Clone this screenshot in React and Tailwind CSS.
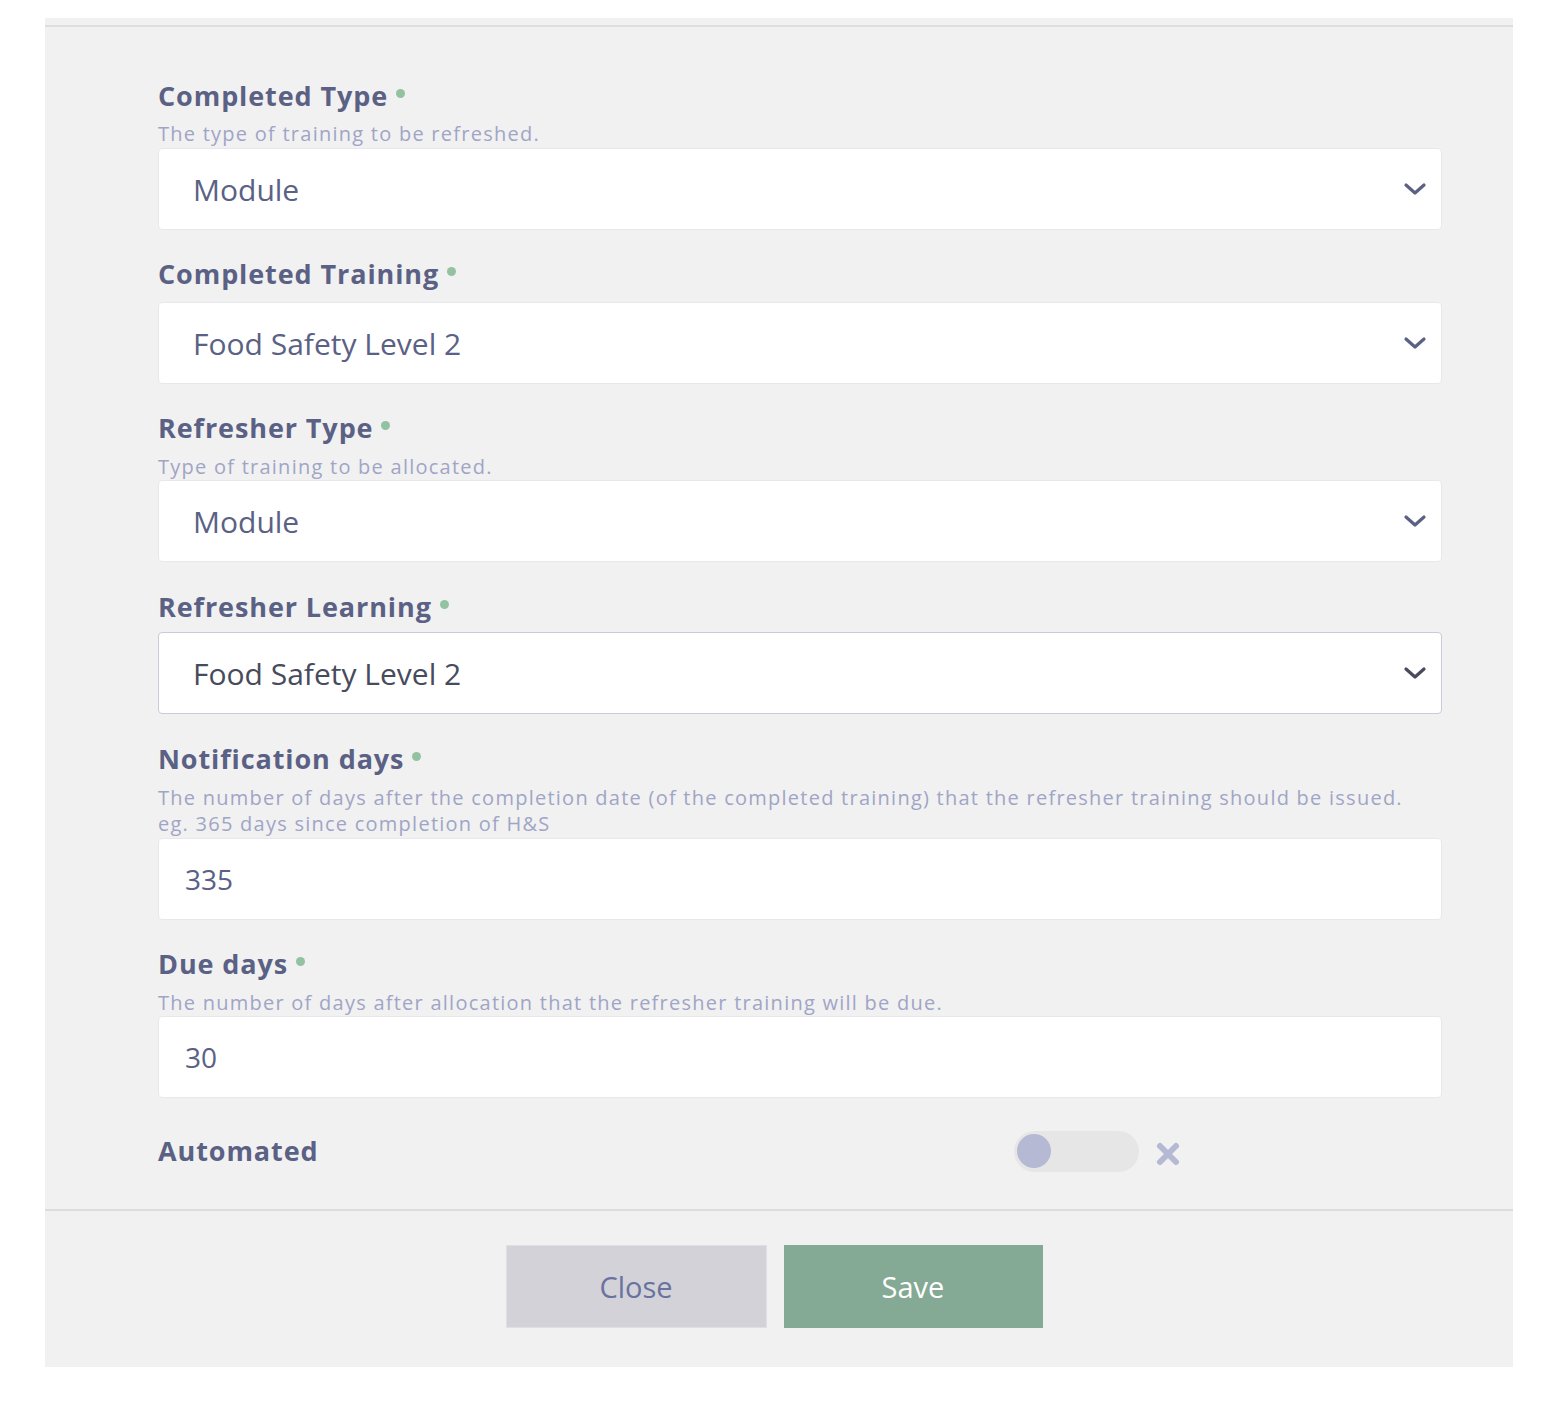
const FONT = { fontFamily: '"Open Sans", "Liberation Sans", sans-serif' }

function Chevron({ color }) {
  return (
    <svg width="24" height="14" viewBox="0 0 24 14" fill="none">
      <path d="M3 3 L12 11 L21 3" stroke={color} strokeWidth="3.2" strokeLinecap="round" strokeLinejoin="round" />
    </svg>
  )
}

function Label({ children, className = '' }) {
  return (
    <div className={`flex items-center text-[27px] leading-[32px] font-bold tracking-[0.9px] text-[#5b6184] ${className}`}>
      <span>{children}</span>
      <span className="ml-[8px] -mt-[6px] w-[9px] h-[9px] rounded-full bg-[#93c2a2]" />
    </div>
  )
}

function Hint({ children, className = '' }) {
  return <p className={`text-[20px] leading-[26px] tracking-[1.25px] text-[#a0a5c6] ${className}`}>{children}</p>
}

function Select({ value, focused, className = '' }) {
  return (
    <div
      className={`flex items-center justify-between h-[82px] pl-[34px] pr-[14px] bg-white rounded-[4px] border ${
        focused ? 'border-[#c9cbd6] text-[#474b5c]' : 'border-[#e8e8ec] text-[#5b6184]'
      } ${className}`}
    >
      <span className="text-[30px]">{value}</span>
      <Chevron color={focused ? '#474b5c' : '#5b6184'} />
    </div>
  )
}

function NumberInput({ value, className = '' }) {
  return (
    <div className={`flex items-center h-[82px] pl-[26px] bg-white rounded-[4px] border border-[#e8e8ec] ${className}`}>
      <span className="text-[28px] text-[#5b6184]">{value}</span>
    </div>
  )
}

export default function App() {
  return (
    <div className="w-[1550px] h-[1404px] bg-white pt-[18px]" style={FONT}>
      <div className="ml-[45px] w-[1468px] bg-[#f1f1f1]">
        <div className="h-[7px]" />
        <div className="border-t-2 border-[#dedede]" />

        <div className="pl-[113px] pr-[71px] pt-[53px] pb-[37px]">
          <Label>Completed Type</Label>
          <Hint className="mt-[9px]">The type of training to be refreshed.</Hint>
          <Select value="Module" className="mt-[1px]" />

          <Label className="mt-[28px]">Completed Training</Label>
          <Select value="Food Safety Level 2" className="mt-[12px]" />

          <Label className="mt-[28px]">Refresher Type</Label>
          <Hint className="mt-[10px]">Type of training to be allocated.</Hint>
          <Select value="Module" />

          <Label className="mt-[29px]">Refresher Learning</Label>
          <Select value="Food Safety Level 2" focused className="mt-[9px]" />

          <Label className="mt-[29px]">Notification days</Label>
          <Hint className="mt-[10px]">
            The number of days after the completion date (of the completed training) that the refresher training should be issued.
            <br />
            eg. 365 days since completion of H&amp;S
          </Hint>
          <NumberInput value="335" className="mt-[1px]" />

          <Label className="mt-[28px]">Due days</Label>
          <Hint className="mt-[10px]">The number of days after allocation that the refresher training will be due.</Hint>
          <NumberInput value="30" />

          <div className="flex items-center mt-[32px] h-[42px]">
            <span className="w-[856px] text-[27px] font-bold tracking-[0.9px] text-[#5b6184]">Automated</span>
            <div className="flex items-center w-[125px] h-[41px] rounded-full bg-[#e6e6e6] pl-[3px]">
              <div className="w-[34px] h-[34px] rounded-full bg-[#b5b9d3]" />
            </div>
            <svg width="26" height="26" viewBox="0 0 26 26" className="ml-[16px] mt-[5px]">
              <path d="M5 5 L21 21 M21 5 L5 21" stroke="#b5b9d3" strokeWidth="6" strokeLinecap="round" />
            </svg>
          </div>
        </div>

        <div className="border-t-2 border-[#dcdcdc]" />

        <div className="flex justify-center gap-[17px] pt-[34px] pb-[39px] pr-[10px]">
          <button className="w-[261px] h-[83px] bg-[#d2d2d8] border border-[#e0e0e4] text-[29px] text-[#6a72a0]">
            Close
          </button>
          <button className="w-[259px] h-[83px] bg-[#84a994] text-[29px] text-white">
            Save
          </button>
        </div>
      </div>
    </div>
  )
}
